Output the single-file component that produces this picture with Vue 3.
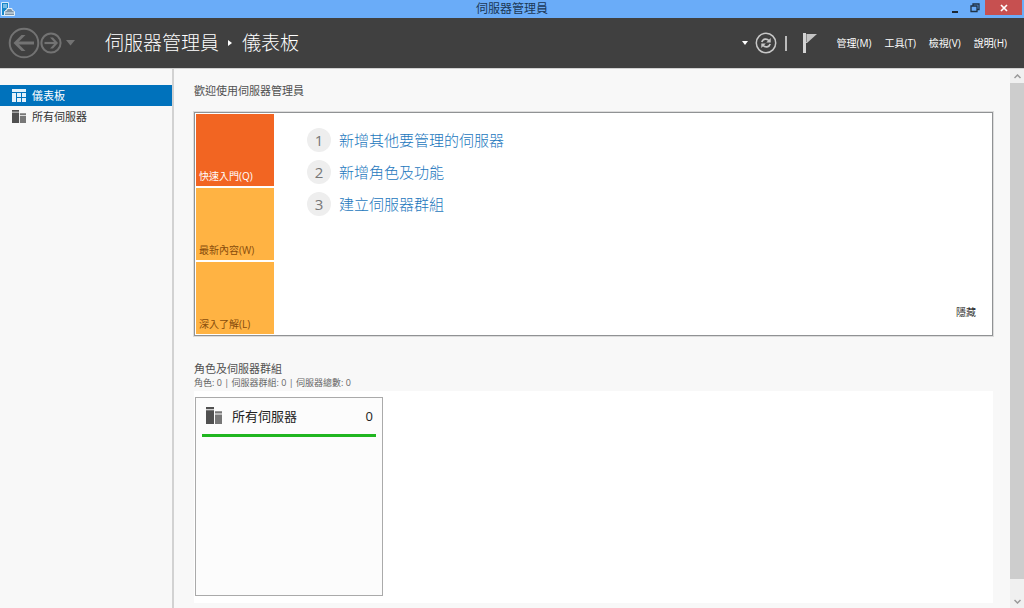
<script setup>
const menus = ['管理(M)', '工具(T)', '檢視(V)', '說明(H)']
const tiles = [
  { label: '快速入門(Q)', active: true },
  { label: '最新內容(W)', active: false },
  { label: '深入了解(L)', active: false },
]
const steps = ['新增其他要管理的伺服器', '新增角色及功能', '建立伺服器群組']
</script>

<template>
  <div class="window">
    <header class="titlebar">
      <svg class="app-icon" width="14" height="14" viewBox="0 0 14 14" aria-hidden="true">
        <path d="M.5.500h7V7L4 9v4.500H.5z" fill="#1687c9" stroke="#d8edff" />
        <path d="M2 3h4M2 5h4" stroke="#d8edff" />
        <path d="M3.500 9.500 6 8V6.500h5V8l2.500 1.500v4h-10z" fill="#7d93a5" stroke="#e4f0f8" />
        <path d="M4 11h9" stroke="#e4f0f8" />
      </svg>
      <h1 class="title">伺服器管理員</h1>
      <div class="controls">
        <button class="control" type="button" aria-label="最小化">
          <svg width="8" height="10" viewBox="0 0 8 10"><path d="M1 8h6v2H1z" fill="#1b2733" /></svg>
        </button>
        <button class="control" type="button" aria-label="還原">
          <svg width="10" height="10" viewBox="0 0 10 10"><path d="M3 2.500V1h6v5.500H7.500M1 3h6v5.500H1z" fill="none" stroke="#1f3143" stroke-width="1.300" /></svg>
        </button>
        <button class="control close" type="button" aria-label="關閉">
          <svg width="8" height="8" viewBox="0 0 8 8"><path d="m1 1 6 6M7 1 1 7" stroke="#fff" stroke-width="1.700" /></svg>
        </button>
      </div>
    </header>

    <div class="navbar">
      <div class="history">
        <button type="button" aria-label="上一頁">
          <svg width="32" height="32" viewBox="0 0 32 32" fill="none" stroke="#737373">
            <circle cx="16" cy="16" r="14.300" stroke-width="2" />
            <path d="M26 16H9" stroke-width="3" /><path d="M17.500 8h-4l-8 8 8 8h4l-8-8z" fill="#737373" stroke="none" />
          </svg>
        </button>
        <button type="button" aria-label="下一頁">
          <svg width="22" height="22" viewBox="0 0 22 22" fill="none" stroke="#737373">
            <circle cx="11" cy="11" r="9.600" stroke-width="2" />
            <path d="M4.500 11h11" stroke-width="2.200" /><path d="M10 5.500h3l5 5.500-5 5.500h-3l5-5.500z" fill="#737373" stroke="none" />
          </svg>
        </button>
        <button type="button" class="drop" aria-label="歷程記錄">
          <svg width="9" height="6" viewBox="0 0 9 6"><path d="M0 0h9L4.500 5.500z" fill="#737373" /></svg>
        </button>
      </div>
      <nav class="crumbs" aria-label="路徑">
        <a href="#">伺服器管理員</a>
        <svg width="5" height="8" viewBox="0 0 5 8" aria-hidden="true"><path d="M0 1v6l4-3z" fill="#fff" /></svg>
        <span>儀表板</span>
      </nav>
      <div class="tools">
        <button type="button" aria-label="重新整理選項">
          <svg width="6" height="4" viewBox="0 0 6 4"><path d="M0 0h6L3 4z" fill="#fff" /></svg>
        </button>
        <button type="button" class="refresh" aria-label="重新整理">
          <svg width="22" height="22" viewBox="0 0 22 22" fill="none" stroke="#c8c8c8">
            <circle cx="11" cy="11" r="9.700" stroke-width="1.500" />
            <path d="M6.800 10c1-3.200 5-3.800 7.200-1.300M15.200 12c-1 3.200-5 3.800-7.200 1.300" stroke-width="1.700" />
            <path d="M15.700 6v4.500h-4.500zM6.300 16v-4.500h4.500z" fill="#c8c8c8" stroke="none" />
          </svg>
        </button>
        <span class="divider"></span>
        <button type="button" class="flag" aria-label="通知">
          <svg width="14" height="20" viewBox="0 0 14 20"><path d="M0 0h3v20H0z" fill="#d4d4d4" /><path d="M3 1h11L4 10H3z" fill="#c4c4c4" /><path d="M3.500 1v8" stroke="#8c8c8c" /></svg>
        </button>
        <nav class="menus" aria-label="功能表">
          <button v-for="menu in menus" :key="menu" type="button">{{ menu }}</button>
        </nav>
      </div>
    </div>

    <div class="body">
      <nav class="sidebar" aria-label="瀏覽">
        <a href="#" class="side-item current" aria-current="page">
          <svg width="14" height="13" viewBox="0 0 14 13" fill="#e4f1fa" aria-hidden="true"><path d="M0 0h14v3H0zM0 4h4v9H0zM5 4h4v4H5zM10 4h4v4h-4zM5 9h4v4H5zM10 9h4v4h-4z" /></svg>
          <span>儀表板</span>
        </a>
        <a href="#" class="side-item">
          <svg width="14" height="13" viewBox="0 0 16 16" preserveAspectRatio="none" aria-hidden="true"><path d="M0 0h8v2H0zM0 3h8v13H0z" fill="#505050" /><path d="M9 4h7v2H9zM9 7h7v9H9z" fill="#777" /></svg>
          <span>所有伺服器</span>
        </a>
      </nav>

      <main class="content">
        <section>
          <h2 class="heading">歡迎使用伺服器管理員</h2>
          <div class="welcome">
            <div class="tiles">
              <button v-for="tile in tiles" :key="tile.label" type="button" class="tile" :class="{ active: tile.active }">{{ tile.label }}</button>
            </div>
            <ol class="steps">
              <li v-for="(step, i) in steps" :key="step">
                <span class="number">{{ i + 1 }}</span>
                <a href="#">{{ step }}</a>
              </li>
            </ol>
            <button type="button" class="hide">隱藏</button>
          </div>
        </section>

        <section class="groups">
          <h2 class="heading">角色及伺服器群組</h2>
          <p class="summary">角色: 0 | 伺服器群組: 0 | 伺服器總數: 0</p>
          <div class="board">
            <article class="card">
              <h3 class="card-head">
                <svg width="16" height="17" viewBox="0 0 16 16" preserveAspectRatio="none" aria-hidden="true"><path d="M0 0h8v2H0zM0 3h8v13H0z" fill="#505050" /><path d="M9 4h7v2H9zM9 7h7v9H9z" fill="#777" /></svg>
                <span>所有伺服器</span>
                <span class="count">0</span>
              </h3>
            </article>
          </div>
        </section>
      </main>

      <div class="scrollbar">
        <button type="button" aria-label="向上捲動">
          <svg width="7" height="5" viewBox="0 0 7 5"><path d="m.5 4 3-3 3 3" fill="none" stroke="#999" stroke-width="1.500" /></svg>
        </button>
        <div class="thumb"></div>
        <button type="button" class="down" aria-label="向下捲動">
          <svg width="7" height="5" viewBox="0 0 7 5"><path d="m.5 1 3 3 3-3" fill="none" stroke="#999" stroke-width="1.500" /></svg>
        </button>
      </div>
    </div>
  </div>
</template>

<style>
body {
  margin: 0;
}
</style>

<style scoped>
.window {
  display: flex;
  flex-direction: column;
  min-height: 100vh;
  background: #f8f8f8;
  color: #444;
  font: 11px/16px "Open Sans", "Noto Sans CJK TC", sans-serif;
}
.window * {
  box-sizing: border-box;
}
button {
  display: flex;
  align-items: center;
  justify-content: center;
  padding: 0;
  border: 0;
  background: none;
  color: inherit;
  font: inherit;
}
a {
  color: inherit;
  text-decoration: none;
}
h1,
h2,
h3,
p,
ol {
  margin: 0;
  padding: 0;
  font-weight: 400;
}
svg {
  display: block;
  flex: none;
}
.titlebar {
  display: grid;
  grid-template-columns: 1fr auto 1fr;
  height: 18px;
  background: #6aacf8;
}
.app-icon {
  margin: 2px 1px;
}
.title {
  color: #1c3856;
  font-size: 12px;
  line-height: 18px;
}
.controls {
  display: flex;
  justify-content: flex-end;
  padding-right: 2px;
}
.control {
  width: 20px;
  height: 15px;
}
.control.close {
  width: 37px;
  background: #c75050;
}
.navbar {
  display: flex;
  align-items: center;
  height: 50px;
  padding: 0 17px 0 8px;
  background: #404040;
  color: #fff;
}
.history {
  display: flex;
  align-items: center;
}
.drop {
  margin-left: 4px;
}
.crumbs {
  display: flex;
  align-items: center;
  gap: 9px;
  margin-left: 30px;
  font-size: 19px;
  font-weight: 300;
  line-height: 28px;
}
.tools {
  display: flex;
  align-items: center;
  margin-left: auto;
}
.refresh {
  margin-left: 7px;
}
.divider {
  width: 2px;
  height: 15px;
  margin: 0 16px 0 8px;
  background: #bbb;
}
.menus {
  display: flex;
  gap: 13px;
  margin-left: 20px;
  font-size: 10px;
}
.body {
  display: flex;
  flex: 1;
  border-top: 1px solid #d0d0d0;
}
.sidebar {
  flex: none;
  width: 174px;
  padding-top: 16px;
  border-right: 2px solid #d2d2d2;
}
.side-item {
  display: flex;
  align-items: center;
  gap: 6px;
  height: 21px;
  padding-left: 12px;
  color: #333;
}
.side-item.current {
  background: #0072bc;
  color: #fff;
}
.content {
  flex: 1;
  padding: 14px 17px 4px 20px;
}
.heading {
  color: #505050;
  font-size: 11px;
}
.welcome {
  display: flex;
  margin-top: 13px;
  padding: 1px;
  border: 1px solid #909294;
  background: #fff;
  box-shadow: 0 0 0 1px #dcdcdc;
}
.tiles {
  display: flex;
  flex-direction: column;
  gap: 2px;
}
.tile {
  align-items: flex-end;
  justify-content: flex-start;
  width: 78px;
  height: 72px;
  padding: 0 3px 2px;
  background: #ffb343;
  color: #874c0c;
  font-size: 10px;
}
.tile.active {
  background: #f26522;
  color: #fff;
}
.steps {
  display: flex;
  flex: 1;
  flex-direction: column;
  gap: 8px;
  padding: 14px 0 0 33px;
  list-style: none;
}
.steps li {
  display: flex;
  align-items: center;
  gap: 8px;
  color: #1c77bd;
  font-size: 15px;
  font-weight: 300;
  line-height: 24px;
}
.number {
  width: 24px;
  border-radius: 50%;
  background: #eee;
  color: #777;
  font-weight: 400;
  text-align: center;
}
.hide {
  align-self: flex-end;
  margin: 0 15px 14px 0;
  color: #333;
  font-size: 10px;
}
.groups {
  margin-top: 25px;
}
.summary {
  color: #666;
  font-size: 9px;
  line-height: 12px;
}
.board {
  margin-top: 2px;
  padding: 6px 1px 7px;
  background: #fff;
}
.card {
  width: 188px;
  height: 199px;
  padding: 6px;
  border: 1px solid #aaa;
  background: #fcfcfc;
}
.card-head {
  display: flex;
  align-items: center;
  height: 33px;
  padding: 0 3px 7px 4px;
  border-bottom: 3px solid #20b620;
  color: #222;
  font-size: 13px;
  gap: 10px;
}
.count {
  margin-left: auto;
}
.scrollbar {
  display: flex;
  flex: none;
  flex-direction: column;
  width: 14px;
  background: #f0f0f0;
}
.scrollbar button {
  height: 14px;
}
.thumb {
  flex: 1;
  margin-bottom: 15px;
  background: #cdcdcd;
}
</style>
